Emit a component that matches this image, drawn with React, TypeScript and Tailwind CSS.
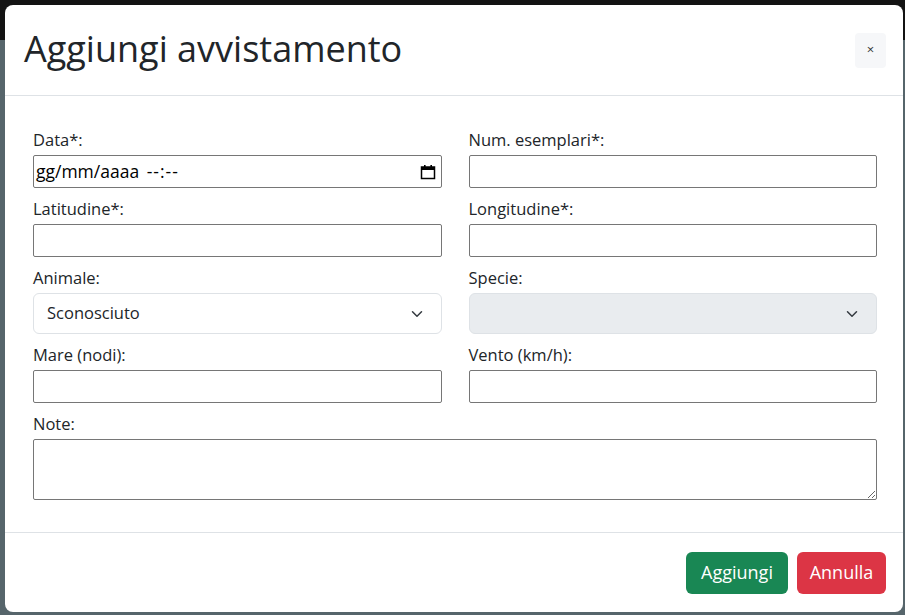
import { ReactNode } from "react";

const font = "font-['Open_Sans','Noto_Sans',Roboto,sans-serif]";

function Label(props: { children: ReactNode }) {
  return (
    <label className="block h-6 leading-6 mb-[3px] text-[16.5px] text-[#212529]">
      {props.children}
    </label>
  );
}

function TextInput() {
  return (
    <input
      type="text"
      className="block w-full h-[33px] border border-[#767676] rounded-[2px] bg-white px-[3px] outline-none"
    />
  );
}

function Chevron() {
  return (
    <svg
      xmlns="http://www.w3.org/2000/svg"
      viewBox="0 0 16 16"
      className="w-4 h-3"
      fill="none"
      stroke="#343a40"
      strokeWidth={2}
      strokeLinecap="round"
      strokeLinejoin="round"
    >
      <path d="m2 5 6 6 6-6" />
    </svg>
  );
}

function Select(props: { value?: string; disabled?: boolean }) {
  return (
    <div
      className={
        "flex items-center justify-between h-[41px] rounded-[6px] border border-[#dee2e6] pl-[13px] pr-[16px] text-[16.5px] text-[#212529] " +
        (props.disabled ? "bg-[#e9ecef]" : "bg-white")
      }
    >
      <span>{props.value}</span>
      <Chevron />
    </div>
  );
}

function DateInput() {
  return (
    <div className="flex items-center justify-between h-[33px] border border-[#767676] rounded-[2px] bg-white pl-[2px] pr-[5px] text-[17.5px] text-black">
      <span>
        gg/mm/aaaa <span className="ml-[3px] tracking-[1px]">--:--</span>
      </span>
      <svg
        xmlns="http://www.w3.org/2000/svg"
        viewBox="0 0 16 16"
        className="w-4 h-4"
        fill="none"
      >
        <rect x="1.5" y="3" width="13" height="11.5" stroke="#000" strokeWidth={1.5} />
        <rect x="1.5" y="3" width="13" height="3" fill="#000" />
        <rect x="4" y="1" width="1.6" height="3" fill="#000" />
        <rect x="10.4" y="1" width="1.6" height="3" fill="#000" />
      </svg>
    </div>
  );
}

export default function App() {
  return (
    <div className={"relative w-[905px] h-[615px] overflow-hidden flex flex-col " + font}>
      <div className="h-10 bg-[#131313]" />
      <div className="flex-1 bg-[#56656b]" />

      <div className="absolute left-[5px] top-[5px] w-[898px] h-[607px] bg-white rounded-[8px] flex flex-col">
        <div className="h-[91px] flex items-center justify-between pl-[19px] pr-[17px] border-b border-[#dee2e6]">
          <h1 className="text-[36px] leading-[1.2] font-medium text-[#212529] -mt-[2px]">
            Aggiungi avvistamento
          </h1>
          <button className="w-[31px] h-[35px] rounded-[4px] bg-[#f6f7f9] text-[13px] text-[#333] flex items-center justify-center">
            ×
          </button>
        </div>

        <div className="flex-1 pt-[32px] pl-[28px] pr-[26px] pb-[31px] border-b border-[#dee2e6]">
          <div className="grid grid-cols-2 gap-x-[27px] gap-y-[9px]">
            <div>
              <Label>Data*:</Label>
              <DateInput />
            </div>
            <div>
              <Label>Num. esemplari*:</Label>
              <TextInput />
            </div>
            <div>
              <Label>Latitudine*:</Label>
              <TextInput />
            </div>
            <div>
              <Label>Longitudine*:</Label>
              <TextInput />
            </div>
            <div>
              <Label>Animale:</Label>
              <Select value="Sconosciuto" />
            </div>
            <div>
              <Label>Specie:</Label>
              <Select disabled />
            </div>
            <div>
              <Label>Mare (nodi):</Label>
              <TextInput />
            </div>
            <div>
              <Label>Vento (km/h):</Label>
              <TextInput />
            </div>
            <div className="col-span-2">
              <Label>Note:</Label>
              <textarea className="block w-full h-[61px] border border-[#767676] rounded-[2px] bg-white outline-none" />
            </div>
          </div>
        </div>

        <div className="h-[79px] flex items-center justify-end gap-[9px] pr-[17px]">
          <button className="h-[42px] w-[102px] rounded-[6px] bg-[#198754] text-white text-[18px]">
            Aggiungi
          </button>
          <button className="h-[42px] w-[89px] rounded-[6px] bg-[#dc3545] text-white text-[18px]">
            Annulla
          </button>
        </div>
      </div>
    </div>
  );
}
